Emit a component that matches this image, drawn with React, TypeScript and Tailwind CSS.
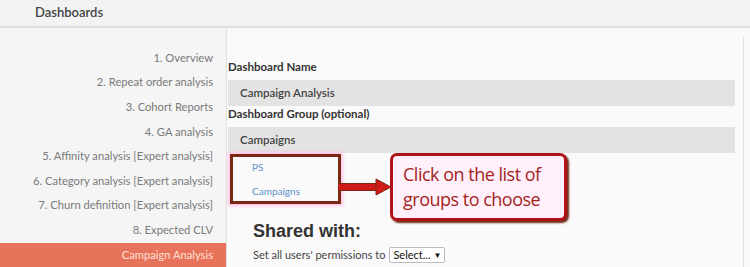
import React from 'react';

const items = [
  '1. Overview',
  '2. Repeat order analysis',
  '3. Cohort Reports',
  '4. GA analysis',
  '5. Affinity analysis [Expert analysis]',
  '6. Category analysis [Expert analysis]',
  '7. Churn definition [Expert analysis]',
  '8. Expected CLV',
];

export default function App() {
  return (
    <div className="w-[750px] h-[267px] overflow-hidden bg-[#fafafa] font-['Lato',sans-serif]">
      <div className="h-[28px] bg-[#f3f3f3] border-b-2 border-[#dedede] flex items-center pl-[35px]">
        <span className="text-[13px] font-semibold text-[#444]">Dashboards</span>
      </div>

      <div className="flex h-[239px]">
        <div className="w-[227px] shrink-0 bg-[#f5f5f5] border-r border-[#e2e2e2] pt-[18px]">
          {items.map(label => (
            <div key={label} className="h-[24.6px] flex items-center justify-end pr-[13px] text-[11.2px] text-[#7a7a7a]">
              {label}
            </div>
          ))}
          <div className="h-[26px] flex items-center justify-end pr-[13px] bg-[#e8735b] text-[11.2px] text-[#ffe0d6]">
            Campaign Analysis
          </div>
        </div>

        <div className="flex-1 flex">
          <div className="flex-1 pl-px pr-[8px] pt-[32px]">
            <div className="text-[11.5px] font-bold text-[#333] leading-[14px]">Dashboard Name</div>
            <div className="mt-[6px] h-[26px] bg-[#e3e3e3] flex items-center pl-[12px] text-[11.5px] font-semibold text-[#444]">
              Campaign Analysis
            </div>
            <div className="h-[16px] flex items-center text-[11.5px] font-bold text-[#333]">Dashboard Group (optional)</div>
            <div className="mt-[5px] h-[26px] bg-[#e3e3e3] flex items-center pl-[12px] text-[11.5px] font-semibold text-[#444]">
              Campaigns
            </div>

            <div className="flex items-start">
              <div className="ml-[2px] mt-[1px] w-[111px] h-[50px] border-[3px] border-[#7a2a12] shadow-[0_0_3px_2px_#ffc4e6] flex flex-col gap-[4px] pl-[19px] text-[10px] text-[#5e90c8]">
                <div className="h-[20px] flex items-center">PS</div>
                <div className="h-[20px] flex items-center">Campaigns</div>
              </div>
              <svg width="53" height="20" viewBox="0 0 53 20" className="mt-[24px] -ml-[3px] shrink-0">
                <rect x="0" y="6.5" width="40" height="7" fill="#d11a1a" stroke="#7a2a12" strokeWidth="1" />
                <polygon points="38,2 53,10 38,18" fill="#d11a1a" stroke="#7a2a12" strokeWidth="1" />
              </svg>
              <div className="-ml-[1px] w-[177px] h-[68px] rounded-[7px] border-[3px] border-[#b0121a] bg-[#fff0fb] shadow-[2px_2px_2px_#6b2a14] flex flex-col justify-center pl-[10px] font-['Open_Sans',sans-serif] text-[18px] leading-[25px] text-[#a3251c] tracking-[-0.5px]">
                <span>Click on the list of</span>
                <span>groups to choose</span>
              </div>
            </div>

            <div className="pl-[25px]">
              <div className="font-['Liberation_Sans',sans-serif] text-[18px] font-bold text-[#333] leading-[20px]">Shared with:</div>
              <div className="mt-[6px] flex items-center text-[11px] text-[#444]">
                <span>Set all users' permissions to</span>
                <span className="ml-[4px] h-[16px] w-[56px] border border-[#bbb] bg-white rounded-[2px] flex items-center justify-between px-[3px] text-[11px] text-[#111]">
                  Select...<span className="text-[8px]">▼</span>
                </span>
              </div>
            </div>
          </div>
          <div className="w-px bg-[#e3e3e3] mt-[8px] mr-[6px]" />
        </div>
      </div>
    </div>
  );
}
